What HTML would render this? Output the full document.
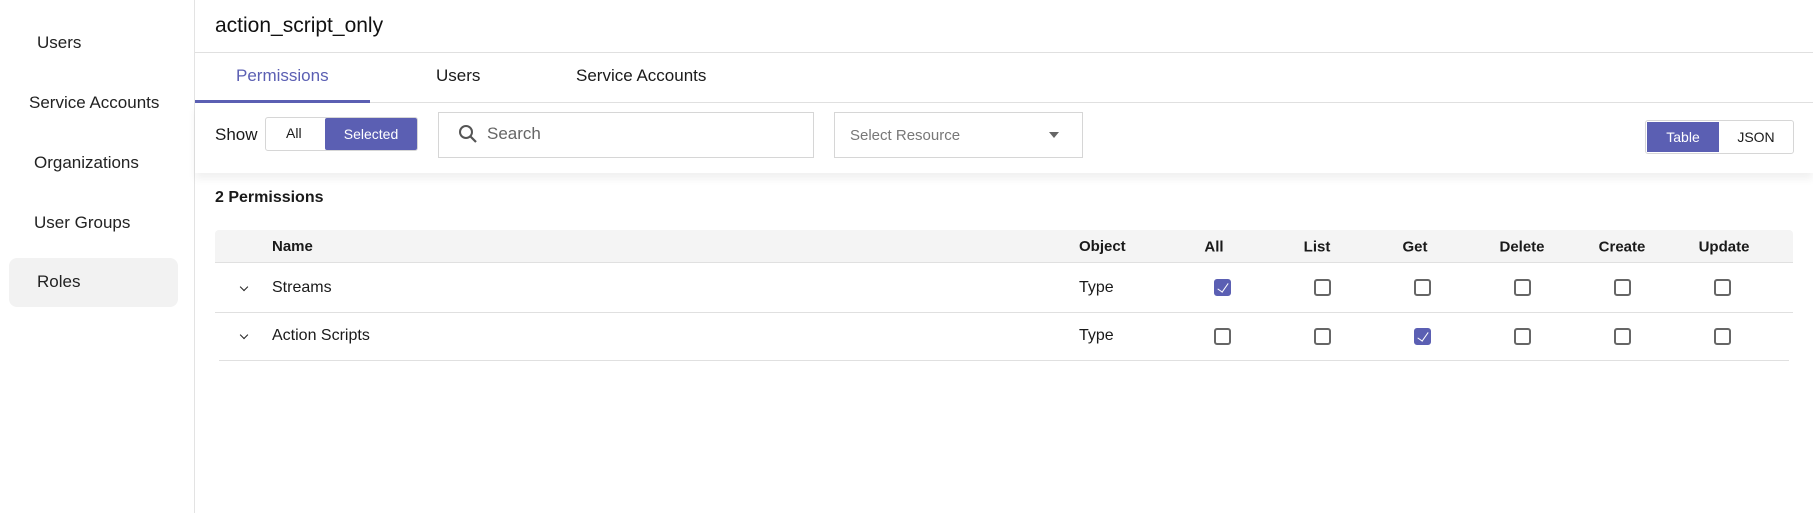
<!DOCTYPE html>
<html><head><meta charset="utf-8"><style>
*{box-sizing:border-box;margin:0;padding:0}
body{width:1813px;height:513px;overflow:hidden;background:#fff;font-family:"Liberation Sans",sans-serif;color:#1a1a1a;position:relative}
.a{position:absolute;white-space:nowrap}
.side{left:0;top:0;width:195px;height:513px;border-right:1px solid #e3e3e3}
.si{font-size:17px;color:#222;transform:translateY(-50%)}
.cb{position:absolute;width:17px;height:17px;border:2px solid #666;border-radius:3px;background:#fff}
.cb.on{background:#5b5fb3;border-color:#5b5fb3}
.cb.on:after{content:"";position:absolute;left:4px;top:0px;width:5px;height:10px;border:solid #fff;border-width:0 1.4px 1.4px 0;transform:rotate(35deg)}
.th{font-size:15px;font-weight:bold;transform:translate(-50%,-50%)}
.td{font-size:16px;transform:translateY(-50%)}
.chev{width:6px;height:6px;border:solid #222;border-width:0 1.6px 1.6px 0;transform:rotate(45deg)}
</style></head><body>
<div class="a side"></div>
<div class="a" style="left:9px;top:258px;width:169px;height:49px;background:#f2f2f2;border-radius:8px"></div>
<div class="a si" style="left:37px;top:43px">Users</div>
<div class="a si" style="left:29px;top:103px">Service Accounts</div>
<div class="a si" style="left:34px;top:163px">Organizations</div>
<div class="a si" style="left:34px;top:223px">User Groups</div>
<div class="a si" style="left:37px;top:282px">Roles</div>

<div class="a" style="left:215px;top:14px;font-size:21px;color:#111">action_script_only</div>
<div class="a" style="left:195px;top:52px;width:1618px;height:1px;background:#e0e0e0"></div>
<div class="a" style="left:236px;top:66px;font-size:17px;color:#5b5fb3">Permissions</div>
<div class="a" style="left:436px;top:66px;font-size:17px">Users</div>
<div class="a" style="left:576px;top:66px;font-size:17px">Service Accounts</div>
<div class="a" style="left:195px;top:102px;width:1618px;height:1px;background:#e0e0e0"></div>
<div class="a" style="left:195px;top:100px;width:175px;height:3px;background:#5b5fb3"></div>

<div class="a" style="left:195px;top:103px;width:1618px;height:70px;background:#fff;box-shadow:0 6px 8px rgba(0,0,0,0.06)"></div>
<div class="a" style="left:215px;top:125px;font-size:17px">Show</div>
<div class="a" style="left:265px;top:117px;width:153px;height:34px;border:1px solid #d6d6d6;border-radius:3px"></div>
<div class="a" style="left:286px;top:125px;font-size:14px">All</div>
<div class="a" style="left:325px;top:118px;width:92px;height:32px;background:#5b5fb3;border-radius:2px;color:#fff;font-size:14px;text-align:center;line-height:32px">Selected</div>
<div class="a" style="left:438px;top:112px;width:376px;height:46px;border:1px solid #d6d6d6"></div>
<svg class="a" style="left:458px;top:124px" width="20" height="20" viewBox="0 0 20 20"><circle cx="8" cy="8" r="6" fill="none" stroke="#555" stroke-width="2"/><line x1="12.5" y1="12.5" x2="18" y2="18" stroke="#555" stroke-width="2.2"/></svg>
<div class="a" style="left:487px;top:124px;font-size:17px;color:#666">Search</div>
<div class="a" style="left:834px;top:112px;width:249px;height:46px;border:1px solid #d6d6d6"></div>
<div class="a" style="left:850px;top:127px;font-size:15px;color:#777">Select Resource</div>
<div class="a" style="left:1049px;top:132px;width:0;height:0;border-left:5px solid transparent;border-right:5px solid transparent;border-top:6px solid #666"></div>
<div class="a" style="left:1645px;top:120px;width:149px;height:34px;border:1px solid #d6d6d6;border-radius:3px"></div>
<div class="a" style="left:1647px;top:122px;width:72px;height:30px;background:#5b5fb3;color:#fff;font-size:14px;text-align:center;line-height:30px">Table</div>
<div class="a" style="left:1719px;top:122px;width:74px;height:30px;font-size:14px;text-align:center;line-height:30px">JSON</div>

<div class="a" style="left:215px;top:189px;font-size:16px;font-weight:bold">2 Permissions</div>
<div class="a" style="left:215px;top:230px;width:1578px;height:33px;background:#f4f4f4;border-radius:4px 4px 0 0;border-bottom:1px solid #e0e0e0"></div>
<div class="a" style="left:272px;top:238px;font-size:15px;font-weight:bold">Name</div>
<div class="a" style="left:1079px;top:238px;font-size:15px;font-weight:bold">Object</div>
<div class="a th" style="left:1214px;top:247px">All</div>
<div class="a th" style="left:1317px;top:247px">List</div>
<div class="a th" style="left:1415px;top:247px">Get</div>
<div class="a th" style="left:1522px;top:247px">Delete</div>
<div class="a th" style="left:1622px;top:247px">Create</div>
<div class="a th" style="left:1724px;top:247px">Update</div>

<div class="a" style="left:215px;top:312px;width:1578px;height:1px;background:#e0e0e0"></div>
<div class="a" style="left:219px;top:360px;width:1570px;height:1px;background:#e0e0e0"></div>
<div class="a chev" style="left:241px;top:284px"></div>
<div class="a chev" style="left:241px;top:332px"></div>
<div class="a td" style="left:272px;top:288px">Streams</div>
<div class="a td" style="left:272px;top:336px">Action Scripts</div>
<div class="a td" style="left:1079px;top:288px">Type</div>
<div class="a td" style="left:1079px;top:336px">Type</div>

<div class="cb on" style="left:1214px;top:279px"></div>
<div class="cb" style="left:1314px;top:279px"></div>
<div class="cb" style="left:1414px;top:279px"></div>
<div class="cb" style="left:1514px;top:279px"></div>
<div class="cb" style="left:1614px;top:279px"></div>
<div class="cb" style="left:1714px;top:279px"></div>
<div class="cb" style="left:1214px;top:328px"></div>
<div class="cb" style="left:1314px;top:328px"></div>
<div class="cb on" style="left:1414px;top:328px"></div>
<div class="cb" style="left:1514px;top:328px"></div>
<div class="cb" style="left:1614px;top:328px"></div>
<div class="cb" style="left:1714px;top:328px"></div>
</body></html>
